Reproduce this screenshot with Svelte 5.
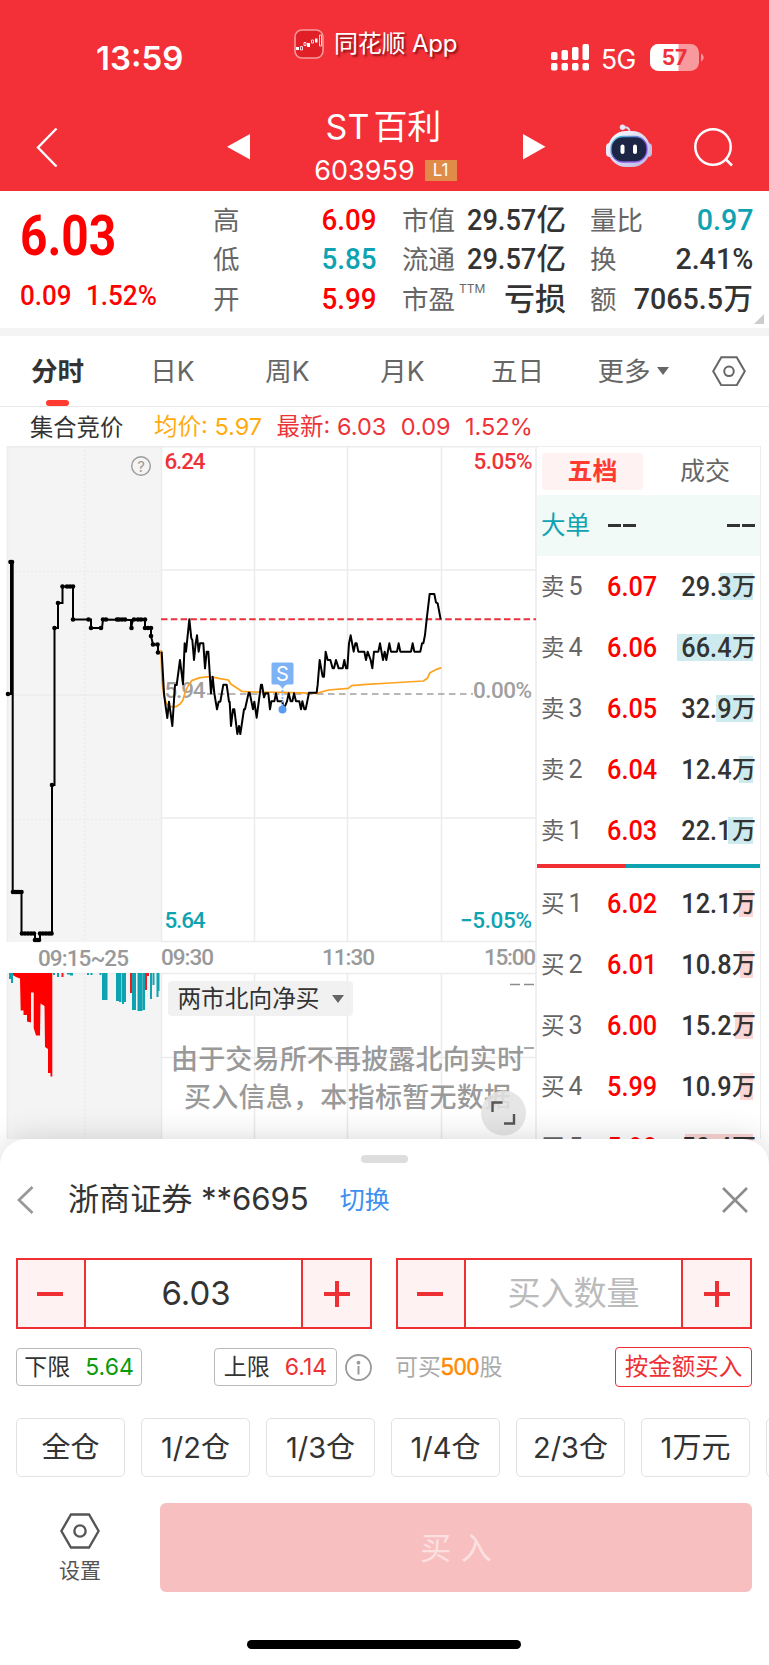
<script lang="ts">
  type Level = { side: string; n: number; price: string; vol: string; bar: number };

  const tabs = ['分时', '日K', '周K', '月K', '五日'];
  let activeTab = $state(0);

  const asks: Level[] = [
    { side: '卖', n: 5, price: '6.07', vol: '29.3', bar: 33 },
    { side: '卖', n: 4, price: '6.06', vol: '66.4', bar: 76 },
    { side: '卖', n: 3, price: '6.05', vol: '32.9', bar: 37 },
    { side: '卖', n: 2, price: '6.04', vol: '12.4', bar: 14 },
    { side: '卖', n: 1, price: '6.03', vol: '22.1', bar: 25 },
  ];
  const bids: Level[] = [
    { side: '买', n: 1, price: '6.02', vol: '12.1', bar: 14 },
    { side: '买', n: 2, price: '6.01', vol: '10.8', bar: 13 },
    { side: '买', n: 3, price: '6.00', vol: '15.2', bar: 18 },
    { side: '买', n: 4, price: '5.99', vol: '10.9', bar: 13 },
    { side: '买', n: 5, price: '5.98', vol: '50.4', bar: 68 },
  ];

  // the last chip only peeks in at the edge
  const quick = ['全仓', '1/2仓', '1/3仓', '1/4仓', '2/3仓', '1万元', ''];

  // call auction steps
  const auction =
    '8,248 11,248 11,116 12.7,116 12.7,446 21.5,446 21.5,487.5 35,487.5 35,494 40,494 40,487.5 52,487.5 52,339 54.5,339 54.5,182 58,182 58,157 62.5,157 62.5,140.5 73,140.5 73,173.5 91,173.5 91,182 102,182 103,173.5 131,174 131,182 133,173.5 145,173.5 145,182 151,182 151,190 153,198.5 158,198.5 158,206.5';
  const auctionDots = [
    [8, 248], [10.5, 116], [12, 116], [13, 446], [15, 446], [17, 446], [19, 446], [21.5, 446],
    [22, 487.5], [25, 487.5], [28, 487.5], [31, 487.5], [34, 487.5], [35, 494], [37, 494], [39, 494],
    [40, 487.5], [43, 487.5], [46, 487.5], [49, 487.5], [51.5, 487.5], [52, 339], [54.5, 182], [58, 157],
    [62.5, 140.5], [67, 140.5], [70, 140.5], [73, 140.5], [73, 173.5], [88.5, 173.5], [91, 182],
    [101, 182], [103, 173.5], [106, 173.5], [117, 173.5], [119, 173.5], [122, 173.5], [125, 173.5],
    [131.5, 182], [134, 173.5], [138, 173.5], [141, 173.5], [145, 173.5], [145, 182], [148, 182],
    [151, 182], [151, 190], [153, 198.5], [157.5, 198.5], [158, 206.5],
  ];

  const price =
    '35,275 42,400 47,440 52,474 57,425 67,498 75,375 80,375 90,300 99,373 104,250 108,275 118,178 124,235 127,240 132,300 137,250 141,226 146,275 150,250 160,250 165,325 170,275 175,275 183,400 188,350 193,400 201,448 206,425 211,425 220,374 230,374 237,425 239,425 243,498 249,448 253,448 262,522 267,498 271,522 282,448 285,448 296,398 299,398 309,448 313,425 320,473 333,374 336,374 342,412 346,400 355,400 360,448 364,424 373,424 378,400 383,424 397,424 401,448 411,424 416,400 422,424 427,424 432,400 438,424 448,424 453,448 457,424 463,448 467,448 477,398 500,398 503,374 509,300 518,350 522,350 527,275 533,300 541,300 548,325 552,325 558,300 566,325 578,325 583,300 588,325 592,325 597,250 602,226 611,275 616,250 620,250 625,275 643,275 648,300 653,275 662,300 667,325 672,275 685,275 690,250 699,300 704,275 709,300 718,250 723,275 741,275 746,250 751,275 783,275 788,250 793,275 811,275 816,250 820,250 825,225 830,178 839,102 853,102 858,127 863,130 872,178';
  const average =
    '33,270 36,360 42,410 50,432 60,440 78,440 90,432 98,422 106,395 114,378 125,362 150,353 180,350 210,356 235,360 242,372 262,385 275,394 310,396 400,397 500,400 535,390 595,385 605,377 650,373 720,369 820,363 832,355 840,338 860,328 874,323';

  // [x, width, height, up]
  const volumes: [number, number, number, boolean][] = [
    [9, 2, 6, false], [11, 2, 10, false], [53, 2, 2, false], [57, 2, 4, false], [61.5, 2, 4, true],
    [67, 3, 1.5, false], [70, 3, 2.5, false], [87, 2, 2, false], [90.5, 2, 2, false], [99.5, 2, 2, false],
    [102, 5.5, 27, false], [116, 3, 28, false], [119, 2.5, 29, false], [122, 2, 31, false],
    [124, 2, 29, false], [130, 2, 20, true], [132, 4, 37, false], [137.5, 5, 38, false],
    [142.5, 2.5, 37, false], [145, 2, 17, true], [147, 2, 3, true], [150, 2, 26, false],
    [152.5, 2, 12, false], [156.5, 2, 24, false], [158, 1.5, 18, false],
  ];
</script>

{#snippet hexIcon(size: number, color: string)}
  <svg width={size} height={size * 0.9} viewBox="0 0 34 30.6" fill="none" stroke={color} stroke-width="2">
    <path d="M9.3 1.3h15.4L32.8 15.3 24.7 29.3H9.3L1.2 15.3z" />
    <circle cx="17" cy="15.3" r="4.8" />
  </svg>
{/snippet}

{#snippet stepper(value: string, placeholder: boolean)}
  <div class="stepper">
    <button type="button" class="step minus" aria-label="减"><i></i></button>
    <span class="step-value" class:placeholder>{value}</span>
    <button type="button" class="step plus" aria-label="加"><i></i></button>
  </div>
{/snippet}

{#snippet levels(rows: Level[], kind: string)}
  {#each rows as row}
    <div class="level {kind}">
      <span class="side">{row.side}<b>{row.n}</b></span>
      <span class="din left level-price">{row.price}</span>
      <span class="vol">
        <i style="width: {row.bar}px"></i>
        <span class="din right">{row.vol}</span><em>万</em>
      </span>
    </div>
  {/each}
{/snippet}

<div class="phone">
  <header>
    <div class="status">
      <span class="time">13:59</span>
      <span class="from-app">
        <svg width="30" height="30" viewBox="0 0 30 30">
          <rect x="1" y="1" width="28" height="28" rx="7" fill="#e01f26" stroke="#f59a9d" stroke-width="1.6" />
          <path d="M2 18h3v3H2zM13 14h3v4h-3zM21 9.500h2.500v4H21z" fill="#fff" />
          <path d="M6.500 17.500h2v3.500h-2zM10 13.500h2v3h-2zM17.500 11h2v3h-2zM25.500 6h2v11h-2z" fill="none" stroke="#fff" stroke-width=".8" />
        </svg>
        同花顺 App
      </span>
      <span class="signal">
        <svg width="38" height="27" viewBox="0 0 38 27" fill="#fff">
          <rect y="8" width="6.500" height="8" rx="1.800" /><rect x="10.500" y="6" width="6.500" height="10" rx="1.800" />
          <rect x="21" y="3" width="6.500" height="13" rx="1.800" /><rect x="31.500" width="6.500" height="16" rx="1.800" />
          <rect y="19" width="6.500" height="7.500" rx="1.800" /><rect x="10.500" y="19" width="6.500" height="7.500" rx="1.800" />
          <rect x="21" y="19" width="6.500" height="7.500" rx="1.800" /><rect x="31.500" y="19" width="6.500" height="7.500" rx="1.800" />
        </svg>
        <span class="net">5G</span>
        <svg width="54" height="27" viewBox="0 0 54 27">
          <rect width="49" height="27" rx="8.500" fill="#f8999d" />
          <path d="M8.500 0H28.500V27H8.500A8.500 8.500 0 0 1 0 18.500V8.500A8.500 8.500 0 0 1 8.500 0z" fill="#fff" />
          <path d="M51 9.500c3.500 1.500 3.500 6.500 0 8z" fill="#f8999d" />
          <text x="24.500" y="21" text-anchor="middle" class="battery">57</text>
        </svg>
      </span>
    </div>
    <div class="nav">
      <svg class="back" width="22" height="40" viewBox="0 0 22 40"><path d="M20.500 1.500 2 20.500l18.500 19" fill="none" stroke="#fff" stroke-width="2.400" /></svg>
      <svg class="prev" width="23" height="26" viewBox="0 0 23 26"><path d="M23 0v25.500L0 12.700z" fill="#fff" /></svg>
      <div class="title">
        <h1>ST<span>百利</span></h1>
        <div class="code">603959 <span>L1</span></div>
      </div>
      <svg class="next" width="23" height="26" viewBox="0 0 23 26"><path d="M0 0v25.500L22.500 12.700z" fill="#fff" /></svg>
      <svg class="robot" width="48" height="44" viewBox="0 0 48 44">
        <defs>
          <linearGradient id="shell" x1="0" y1="0" x2="1" y2="1">
            <stop offset="0" stop-color="#fff" /><stop offset="1" stop-color="#b9b5e2" />
          </linearGradient>
          <linearGradient id="visor" x1="0" y1="0" x2="1" y2="1">
            <stop offset="0" stop-color="#4ad2e0" /><stop offset=".6" stop-color="#7d52e0" /><stop offset="1" stop-color="#9c6df5" />
          </linearGradient>
        </defs>
        <path d="M17.500 3.500c5-1 7 1 7.500 5" fill="none" stroke="#dcd9ef" stroke-width="2" />
        <circle cx="17.500" cy="3.200" r="2.700" fill="#e9e7f6" />
        <rect x="1" y="19" width="8" height="14" rx="4" fill="#ece9f8" />
        <rect x="39" y="19" width="8" height="14" rx="4" fill="#c3bfe8" />
        <rect x="3" y="7" width="42" height="36" rx="18" fill="url(#shell)" />
        <rect x="6" y="12.500" width="36" height="25.500" rx="12" fill="#1d2545" stroke="url(#visor)" stroke-width="1.300" />
        <rect x="15.500" y="20.500" width="4" height="9.500" rx="2" fill="#fff" />
        <rect x="28" y="20.500" width="4" height="9.500" rx="2" fill="#fff" />
      </svg>
      <svg class="search" width="41" height="40" viewBox="0 0 41 40" fill="none" stroke="#fff" stroke-width="2.500">
        <circle cx="20" cy="20" r="17.700" /><path d="m32 31.500 7 7" />
      </svg>
    </div>
  </header>

  <section class="quote">
    <div class="last">
      <span class="din left big">6.03</span>
      <div class="change"><span class="din left">0.09</span><span class="din left">1.52%</span></div>
    </div>
    <dl class="c1">
      <div><dt>高</dt><dd class="red"><span class="din right">6.09</span></dd></div>
      <div><dt>低</dt><dd class="teal"><span class="din right">5.85</span></dd></div>
      <div><dt>开</dt><dd class="red"><span class="din right">5.99</span></dd></div>
    </dl>
    <dl class="c2">
      <div><dt>市值</dt><dd><span class="din right">29.57</span>亿</dd></div>
      <div><dt>流通</dt><dd><span class="din right">29.57</span>亿</dd></div>
      <div><dt>市盈<sup>TTM</sup></dt><dd class="loss">亏损</dd></div>
    </dl>
    <dl class="c3">
      <div><dt>量比</dt><dd class="teal"><span class="din right">0.97</span></dd></div>
      <div><dt>换</dt><dd><span class="din right">2.41%</span></dd></div>
      <div><dt>额</dt><dd><span class="din right">7065.5</span>万</dd></div>
    </dl>
    <i class="corner"></i>
  </section>

  <nav class="tabs">
    {#each tabs as tab, i}
      <button type="button" class:active={i === activeTab} onclick={() => (activeTab = i)}>{tab}</button>
    {/each}
    <button type="button" class="more">更多<i></i></button>
    {@render hexIcon(34, '#666')}
  </nav>

  <div class="legend">
    <span class="auction-label">集合竞价</span>
    <span class="avg">均价: 5.97</span>
    <span class="new">最新: 6.03</span>
    <span class="new">0.09</span>
    <span class="new">1.52%</span>
  </div>

  <main>
    <div class="chart">
      <svg width="537" height="693" viewBox="0 0 537 693">
        <rect x="7" y="0" width="154" height="496" fill="#f4f4f4" />
        <rect x="7" y="527" width="154" height="173" fill="#f4f4f4" />
        <g stroke="#ececec" stroke-width="1.500" fill="none">
          <path d="M7 .8H537M161 124H537M7 249H161M161 372H537M161 495.500H537M7 527.500H537M161 611.500H537" />
          <path d="M7.500 0V496M7.500 527V700M161.500 0V496M161.500 527V700M254.500 0V496M254.500 527V700M347.500 0V496M347.500 527V700M441.500 0V496M441.500 527V700M536 0V700" />
          <path d="M84.800 0V496M84.800 527V700M7 125.500H161M7 373.500H161" stroke-dasharray="2 2" />
        </g>

        <text class="num gray lg" x="164.500" y="252" textLength="41">5.94</text>
        <text class="num gray lg" x="473" y="252" textLength="59">0.00%</text>
        <path d="M207 248H473" stroke="#a0a0a0" stroke-width="1.600" stroke-dasharray="6.500 4.500" />
        <path d="M161 173.200H536" stroke="#e9333c" stroke-width="1.900" stroke-dasharray="6.500 3.300" />

        <g transform="translate(150 114) scale(.33333)" fill="none" stroke-linejoin="round">
          <polyline points={average} stroke="#ffa21f" stroke-width="5.200" />
          <polyline points={price} stroke="#000" stroke-width="6" />
        </g>
        <polyline points={auction} fill="none" stroke="#000" stroke-width="2" />
        {#each auctionDots as [x, y]}
          <circle cx={x} cy={y} r="2.300" />
        {/each}

        <path d="M282.500 237V262" stroke="#7db3f5" stroke-width="1.800" stroke-dasharray="2 1.500" />
        <path d="M278 238h9l-4.500 4z" fill="#7db3f5" />
        <circle cx="282.500" cy="263.500" r="4" fill="#5a9cf0" />
        <rect x="271.500" y="216.500" width="22" height="22" rx="1.500" fill="#7db3f5" />
        <text x="282.500" y="234.500" text-anchor="middle" class="mark">S</text>

        <text class="num red" x="164.500" y="22.500" textLength="41">6.24</text>
        <text class="num red" x="473.500" y="22.500" textLength="59">5.05%</text>
        <text class="num teal" x="164.500" y="481.500" textLength="41">5.64</text>
        <text class="num teal" x="460" y="481.500" textLength="72">−5.05%</text>
        <text class="num gray" x="38" y="520" textLength="91">09:15~25</text>
        <text class="num gray" x="161" y="518.500" textLength="53">09:30</text>
        <text class="num gray" x="322" y="518.500" textLength="53">11:30</text>
        <text class="num gray" x="484" y="518.500" textLength="52">15:00</text>

        <circle cx="141" cy="20" r="9.300" fill="none" stroke="#9b9b9b" stroke-width="1.400" />
        <text x="141" y="25.500" text-anchor="middle" class="help">?</text>

        <polygon
          points="12.700,527 12.700,529 16,531 20,532.500 20.700,564.500 23.500,564.500 23.500,569 27,569 27,575.500 31,576.500 31,546.500 33.700,546.500 33.700,582 36,589.500 40,589.500 40.500,557.500 44.500,560 45,601 48,603 48,627 50.500,627 50.500,630.500 52.300,630.500 52.300,527"
          fill="red"
        />
        {#each volumes as [x, w, h, up]}
          <rect {x} y="527" width={w} height={h} fill={up ? '#f01c22' : '#0fa3b1'} />
        {/each}

        <path d="M510 538.500h10M524 538.500h10M524 602h10" stroke="#8c8c8c" stroke-width="1.500" />
        <g class="notice">
          <text x="171" y="622.500" textLength="353">由于交易所不再披露北向实时</text>
          <text x="184" y="660.500" textLength="327">买入信息，本指标暂无数据</text>
        </g>
        <circle cx="503.500" cy="667" r="22.500" fill="#e3e3e3" fill-opacity=".88" />
        <path d="M492.500 666v-9.500h10M514 668v9.500h-10" fill="none" stroke="#555" stroke-width="2.400" />
      </svg>
      <button type="button" class="indicator">两市北向净买<i></i></button>
    </div>

    <aside class="book">
      <div class="book-tabs"><span class="on">五档</span><span>成交</span></div>
      <div class="big-order"><span>大单</span><i class="dash"></i><i class="dash end"></i></div>
      {@render levels(asks, 'ask')}
      <div class="ratio"></div>
      {@render levels(bids, 'bid')}
    </aside>
  </main>

  <section class="sheet">
    <i class="handle"></i>
    <div class="account">
      <svg width="17" height="28" viewBox="0 0 17 28"><path d="M15.500 1 2 14l13.500 13" fill="none" stroke="#999" stroke-width="2.800" /></svg>
      <span class="broker">浙商证券 <b>**6695</b></span>
      <a href="#switch">切换</a>
      <svg class="close" width="26" height="26" viewBox="0 0 26 26"><path d="m1 1 24 24M25 1 1 25" stroke="#8c8c8c" stroke-width="2.600" /></svg>
    </div>

    <div class="inputs">
      {@render stepper('6.03', false)}
      {@render stepper('买入数量', true)}
    </div>

    <div class="limits">
      <span class="limit low">下限<b>5.64</b></span>
      <span class="limit high">上限<b>6.14</b></span>
      <svg width="27" height="27" viewBox="0 0 27 27" fill="none" stroke="#999" stroke-width="1.800">
        <circle cx="13.500" cy="13.500" r="12.500" /><path d="M13.500 12v8.500" stroke-width="2" /><circle cx="13.500" cy="8.700" r="1" fill="#999" />
      </svg>
      <span class="can-buy">可买<b>500</b>股</span>
      <button type="button" class="by-amount">按金额买入</button>
    </div>

    <div class="quick">
      {#each quick as q}
        <button type="button">{q}</button>
      {/each}
    </div>

    <div class="actions">
      <div class="settings">
        {@render hexIcon(40, '#555')}
        <span>设置</span>
      </div>
      <button type="button" class="buy">买 入</button>
    </div>
    <i class="home"></i>
  </section>
</div>

<style>
  :global(body) {
    margin: 0;
    background: #fff;
  }
  .phone {
    width: 769px;
    height: 1665px;
    overflow: hidden;
    display: flex;
    flex-direction: column;
    font-family: Inter, 'Noto Sans CJK SC', sans-serif;
    color: #333;
    line-height: 1;
    background: #fff;
  }
  button {
    font: inherit;
    color: inherit;
    background: none;
    border: 0;
    padding: 0;
    white-space: nowrap;
  }
  svg {
    display: block;
    flex: none;
  }
  i,
  em {
    font-style: normal;
  }
  .din {
    display: inline-block;
    font-family: Roboto, sans-serif;
    font-weight: 500;
    transform: scaleX(0.92);
  }
  .left {
    transform-origin: left;
  }
  .right {
    transform-origin: right;
  }
  .red {
    color: #f00;
    fill: #ee3338;
  }
  .teal {
    color: #0fa3b1;
    fill: #0fa3b1;
  }

  header {
    height: 191px;
    flex: none;
    background: #f32f38;
    color: #fff;
  }
  .status {
    display: flex;
    height: 96px;
  }
  .time {
    flex: none;
    width: 102px;
    margin-right: 96px;
    padding: 42px 0 0 96px;
    font-size: 33px;
    font-weight: 600;
  }
  .from-app {
    display: flex;
    gap: 10px;
    height: 30px;
    margin-top: 29px;
    align-items: center;
    font-size: 24px;
    line-height: 32px;
    letter-spacing: -0.2px;
    text-shadow: 2px 2px 2px rgba(70, 0, 0, 0.6);
    white-space: nowrap;
    width: 257px;
  }
  .signal {
    display: flex;
    height: 27px;
    margin-top: 44px;
    align-items: center;
  }
  .net {
    flex: none;
    width: 49px;
    padding: 3px 0 0 12px;
    font-size: 26.500px;
    letter-spacing: -0.5px;
  }
  .battery {
    font: 700 21px Inter, sans-serif;
    fill: #ee3038;
  }
  .nav {
    display: flex;
    align-items: flex-start;
  }
  .back {
    margin: 31px 0 0 36px;
  }
  .prev {
    margin: 38px 0 0 169px;
  }
  .title {
    width: 273px;
    text-align: center;
  }
  h1 {
    margin: 11px 0 0 -6px;
    font-size: 34px;
    line-height: 40px;
    font-weight: 400;
  }
  h1 span {
    margin-left: 4px;
  }
  .code {
    margin: 10px 0 0 -2px;
    display: flex;
    justify-content: center;
    align-items: center;
    gap: 10px;
    font-size: 27px;
    height: 26px;
  }
  .code span {
    width: 32px;
    height: 21px;
    background: #e08c48;
    font-size: 17px;
    line-height: 21px;
  }
  .next {
    margin-top: 38px;
  }
  .robot {
    margin: 28px 0 0 59px;
  }
  .search {
    margin: 31px 0 0 40px;
  }

  .quote {
    height: 137px;
    flex: none;
    display: flex;
    position: relative;
    border-bottom: 8px solid #f4f4f4;
  }
  .last {
    width: 213px;
    padding-left: 20px;
    box-sizing: border-box;
    color: #f00;
  }
  .big {
    margin-top: 17px;
    font-size: 55px;
    font-weight: 700;
    line-height: 56px;
    transform: scaleX(0.87);
  }
  .change {
    display: flex;
    font-size: 28px;
    margin-top: 18px;
  }
  .change .din:first-child {
    width: 66px;
  }
  .change .din {
    font-weight: 500;
    transform: scaleX(0.93);
  }
  dl {
    margin: 9px 0 0;
  }
  dl div {
    display: flex;
    justify-content: space-between;
    height: 39.500px;
    align-items: center;
    white-space: nowrap;
  }
  dt {
    font-size: 26.500px;
    color: #666;
  }
  dd {
    margin: 0;
    font-size: 29.500px;
    font-weight: 500;
  }
  .loss {
    font-size: 31px;
  }
  sup {
    font-size: 12px;
    vertical-align: 16px;
    line-height: 0;
    margin-left: 4px;
  }
  .c1 {
    width: 163px;
  }
  .c1 .din {
    transform: scaleX(0.94);
  }
  .c2 {
    width: 164px;
    margin-left: 26px;
  }
  .c3 {
    width: 163px;
    margin-left: 24px;
  }
  .c3 .din {
    transform: scaleX(0.97);
  }
  .corner {
    position: absolute;
    right: 5px;
    bottom: 4px;
    border: 5px solid;
    border-color: transparent #ccc #ccc transparent;
  }

  .tabs {
    height: 70px;
    flex: none;
    display: flex;
    align-items: center;
    border-bottom: 1px solid #e8e8e8;
    font-size: 26.500px;
    color: #666;
  }
  .tabs button {
    width: 115px;
    height: 70px;
    position: relative;
  }
  .tabs .active {
    color: #333;
    font-weight: 700;
  }
  .tabs .active::after {
    content: '';
    position: absolute;
    left: 46px;
    bottom: 0;
    width: 23px;
    height: 6px;
    border-radius: 3px;
    background: #ff3b30;
  }
  .tabs .more {
    width: 84px;
    margin: 0 37px 0 16px;
    display: flex;
    align-items: center;
    justify-content: center;
  }
  .more i,
  .indicator i {
    border: 6px solid transparent;
    border-top: 8px solid #666;
    border-bottom: 0;
    margin-left: 6px;
  }

  .legend {
    height: 39px;
    flex: none;
    display: flex;
    align-items: center;
    padding-left: 30px;
    font-size: 23.500px;
    line-height: 28px;
    white-space: nowrap;
  }
  .legend span {
    margin-right: 14.500px;
  }
  .legend .auction-label {
    width: 93px;
    margin-right: 31px;
    padding-top: 3px;
    font-size: 23.300px;
  }
  .avg {
    color: #ffab0f;
  }
  .new {
    color: #ee3338;
  }

  main {
    height: 693px;
    flex: none;
    display: flex;
  }
  .chart {
    width: 537px;
    position: relative;
  }
  .num {
    font: 500 22.500px Roboto, sans-serif;
  }
  .gray {
    fill: #999;
  }
  .lg {
    fill: #a0a0a0;
  }
  .mark {
    font: 20px Inter, sans-serif;
    fill: #fff;
  }
  .help {
    font: 15px Inter, sans-serif;
    fill: #9b9b9b;
  }
  .notice {
    font-size: 27px;
    font-weight: 500;
    fill: #999;
  }
  .indicator {
    position: absolute;
    left: 168px;
    top: 535px;
    width: 185px;
    height: 35px;
    border-radius: 4px;
    background: rgba(238, 238, 238, 0.85);
    font-size: 23.700px;
    display: flex;
    align-items: center;
    justify-content: center;
  }
  .indicator i {
    margin-left: 12px;
  }

  .book {
    width: 224px;
    border-top: 1.500px solid #ececec;
    border-right: 1.500px solid #ececec;
    box-sizing: border-box;
  }
  .book-tabs {
    height: 48px;
    display: flex;
    align-items: center;
    padding: 0 4px 0 5px;
    font-size: 25px;
    color: #666;
  }
  .book-tabs span {
    flex: 1;
    margin-left: 11px;
    text-align: center;
  }
  .book-tabs .on {
    flex: none;
    width: 101px;
    margin: 0;
    line-height: 37px;
    border-radius: 4px;
    background: #fff2f2;
    color: #ff3b30;
    font-weight: 700;
  }
  .big-order {
    height: 61px;
    display: flex;
    align-items: center;
    background: #f1faf6;
    color: #0fa3b1;
    font-size: 24.500px;
    padding: 0 5px 0 4px;
  }
  .dash {
    width: 28px;
    height: 3px;
    margin-left: 18px;
    background: linear-gradient(90deg, #333 13px, transparent 13px 15px, #333 15px);
  }
  .dash.end {
    margin-left: auto;
  }
  .level {
    height: 61px;
    display: flex;
    align-items: center;
    font-size: 27.500px;
    padding: 0 4px;
  }
  .side {
    width: 66px;
    font-size: 23.500px;
    color: #666;
    flex: none;
  }
  .side b {
    font: 25px Roboto, sans-serif;
    margin-left: 4px;
  }
  .level-price {
    width: 66px;
    flex: none;
    color: #f00;
  }
  .vol {
    flex: 1;
    display: flex;
    justify-content: flex-end;
    align-items: center;
    position: relative;
    white-space: nowrap;
  }
  .vol i {
    position: absolute;
    right: 3px;
    top: 0;
    height: 27.500px;
    background: #cdebee;
  }
  .bid .vol i {
    background: #fcd5d5;
  }
  .vol span {
    position: relative;
  }
  .vol em {
    position: relative;
    font-size: 24px;
    font-weight: 500;
  }
  .ratio {
    height: 4px;
    margin: 3px 0 5px;
    background: linear-gradient(90deg, #f03035 89px, #0fa3b1 89px);
  }

  .sheet {
    position: relative;
    height: 526px;
    flex: none;
    border-radius: 26px 26px 0 0;
    background: #fff;
    box-shadow: 0 0 32px rgba(0, 0, 0, 0.16);
    display: flex;
    flex-direction: column;
  }
  .handle {
    width: 47px;
    height: 8px;
    border-radius: 4px;
    background: #ddd;
    margin: 16px auto 0;
  }
  .account {
    height: 74px;
    display: flex;
    align-items: center;
    padding: 0 21px 0 17px;
  }
  .broker {
    font-size: 31.200px;
    margin-left: 34px;
    letter-spacing: -0.1px;
    white-space: nowrap;
  }
  .broker b {
    font-weight: 400;
  }
  .account a {
    margin-left: 31px;
    font-size: 25px;
    color: #3d8ff0;
    text-decoration: none;
  }
  .close {
    margin-left: auto;
  }
  .inputs {
    display: flex;
    gap: 24px;
    margin: 21px 17px 0 16px;
  }
  .stepper {
    flex: 1;
    height: 71px;
    box-sizing: border-box;
    border: 2px solid #ee3035;
    display: flex;
    align-items: center;
  }
  .step {
    width: 67px;
    height: 67px;
    background: #fff2f2;
    display: grid;
    place-items: center;
    box-sizing: content-box;
  }
  .step i {
    width: 26px;
    height: 4px;
    background: #ee3035;
  }
  .minus {
    width: 66px;
    border-right: 2px solid #ee3035;
  }
  .minus i {
    margin-right: 2px;
  }
  .plus {
    border-left: 2px solid #ee3035;
  }
  .plus i::before {
    content: '';
    display: block;
    width: 4px;
    height: 26px;
    margin: -11px auto 0;
    background: #ee3035;
  }
  .step-value {
    flex: 1;
    padding-left: 5px;
    text-align: center;
    font-size: 33px;
  }
  .placeholder {
    padding: 0;
    color: #bbb;
  }
  .limits {
    display: flex;
    align-items: center;
    height: 40px;
    margin: 18px 17px 0 16px;
    font-size: 23px;
    white-space: nowrap;
  }
  .limits b {
    font-weight: 400;
  }
  .limit {
    height: 35.500px;
    border: 1.500px solid #bbb;
    border-radius: 4px;
    display: flex;
    align-items: center;
    justify-content: center;
    gap: 15px;
    width: 124px;
  }
  .high {
    width: 121px;
    margin: 0 8px 0 72px;
  }
  .low b {
    color: #0a9b0a;
  }
  .high b {
    color: #ee3035;
  }
  .can-buy {
    margin-left: 23px;
    color: #aaa;
  }
  .limits .can-buy b {
    font-family: 'Liberation Sans', sans-serif;
    color: #ff8a00;
    -webkit-text-stroke: 0.4px #ff8a00;
  }
  .by-amount {
    margin-left: auto;
    width: 137px;
    height: 40px;
    border: 1.500px solid #ee3035;
    border-radius: 4px;
    color: #ee3035;
    font-size: 23.500px;
  }
  .quick {
    display: flex;
    gap: 16px;
    margin: 31px 0 0 16px;
    overflow: hidden;
  }
  .quick button {
    flex: none;
    width: 109px;
    height: 59px;
    border: 1.500px solid #e2e2e2;
    border-radius: 5px;
    font-size: 29px;
  }
  .actions {
    display: flex;
    margin: 26px 17px 0 0;
  }
  .settings {
    width: 160px;
    display: flex;
    flex-direction: column;
    align-items: center;
    padding-top: 10px;
    font-size: 21px;
    gap: 11px;
    color: #555;
    box-sizing: border-box;
  }
  .buy {
    flex: 1;
    height: 89px;
    border-radius: 6px;
    background: #f8bfc0;
    color: #fce0e0;
    font-size: 31px;
    word-spacing: 1px;
  }
  .home {
    position: absolute;
    left: 247px;
    bottom: 16px;
    width: 274px;
    height: 9px;
    border-radius: 5px;
    background: #000;
  }
</style>
